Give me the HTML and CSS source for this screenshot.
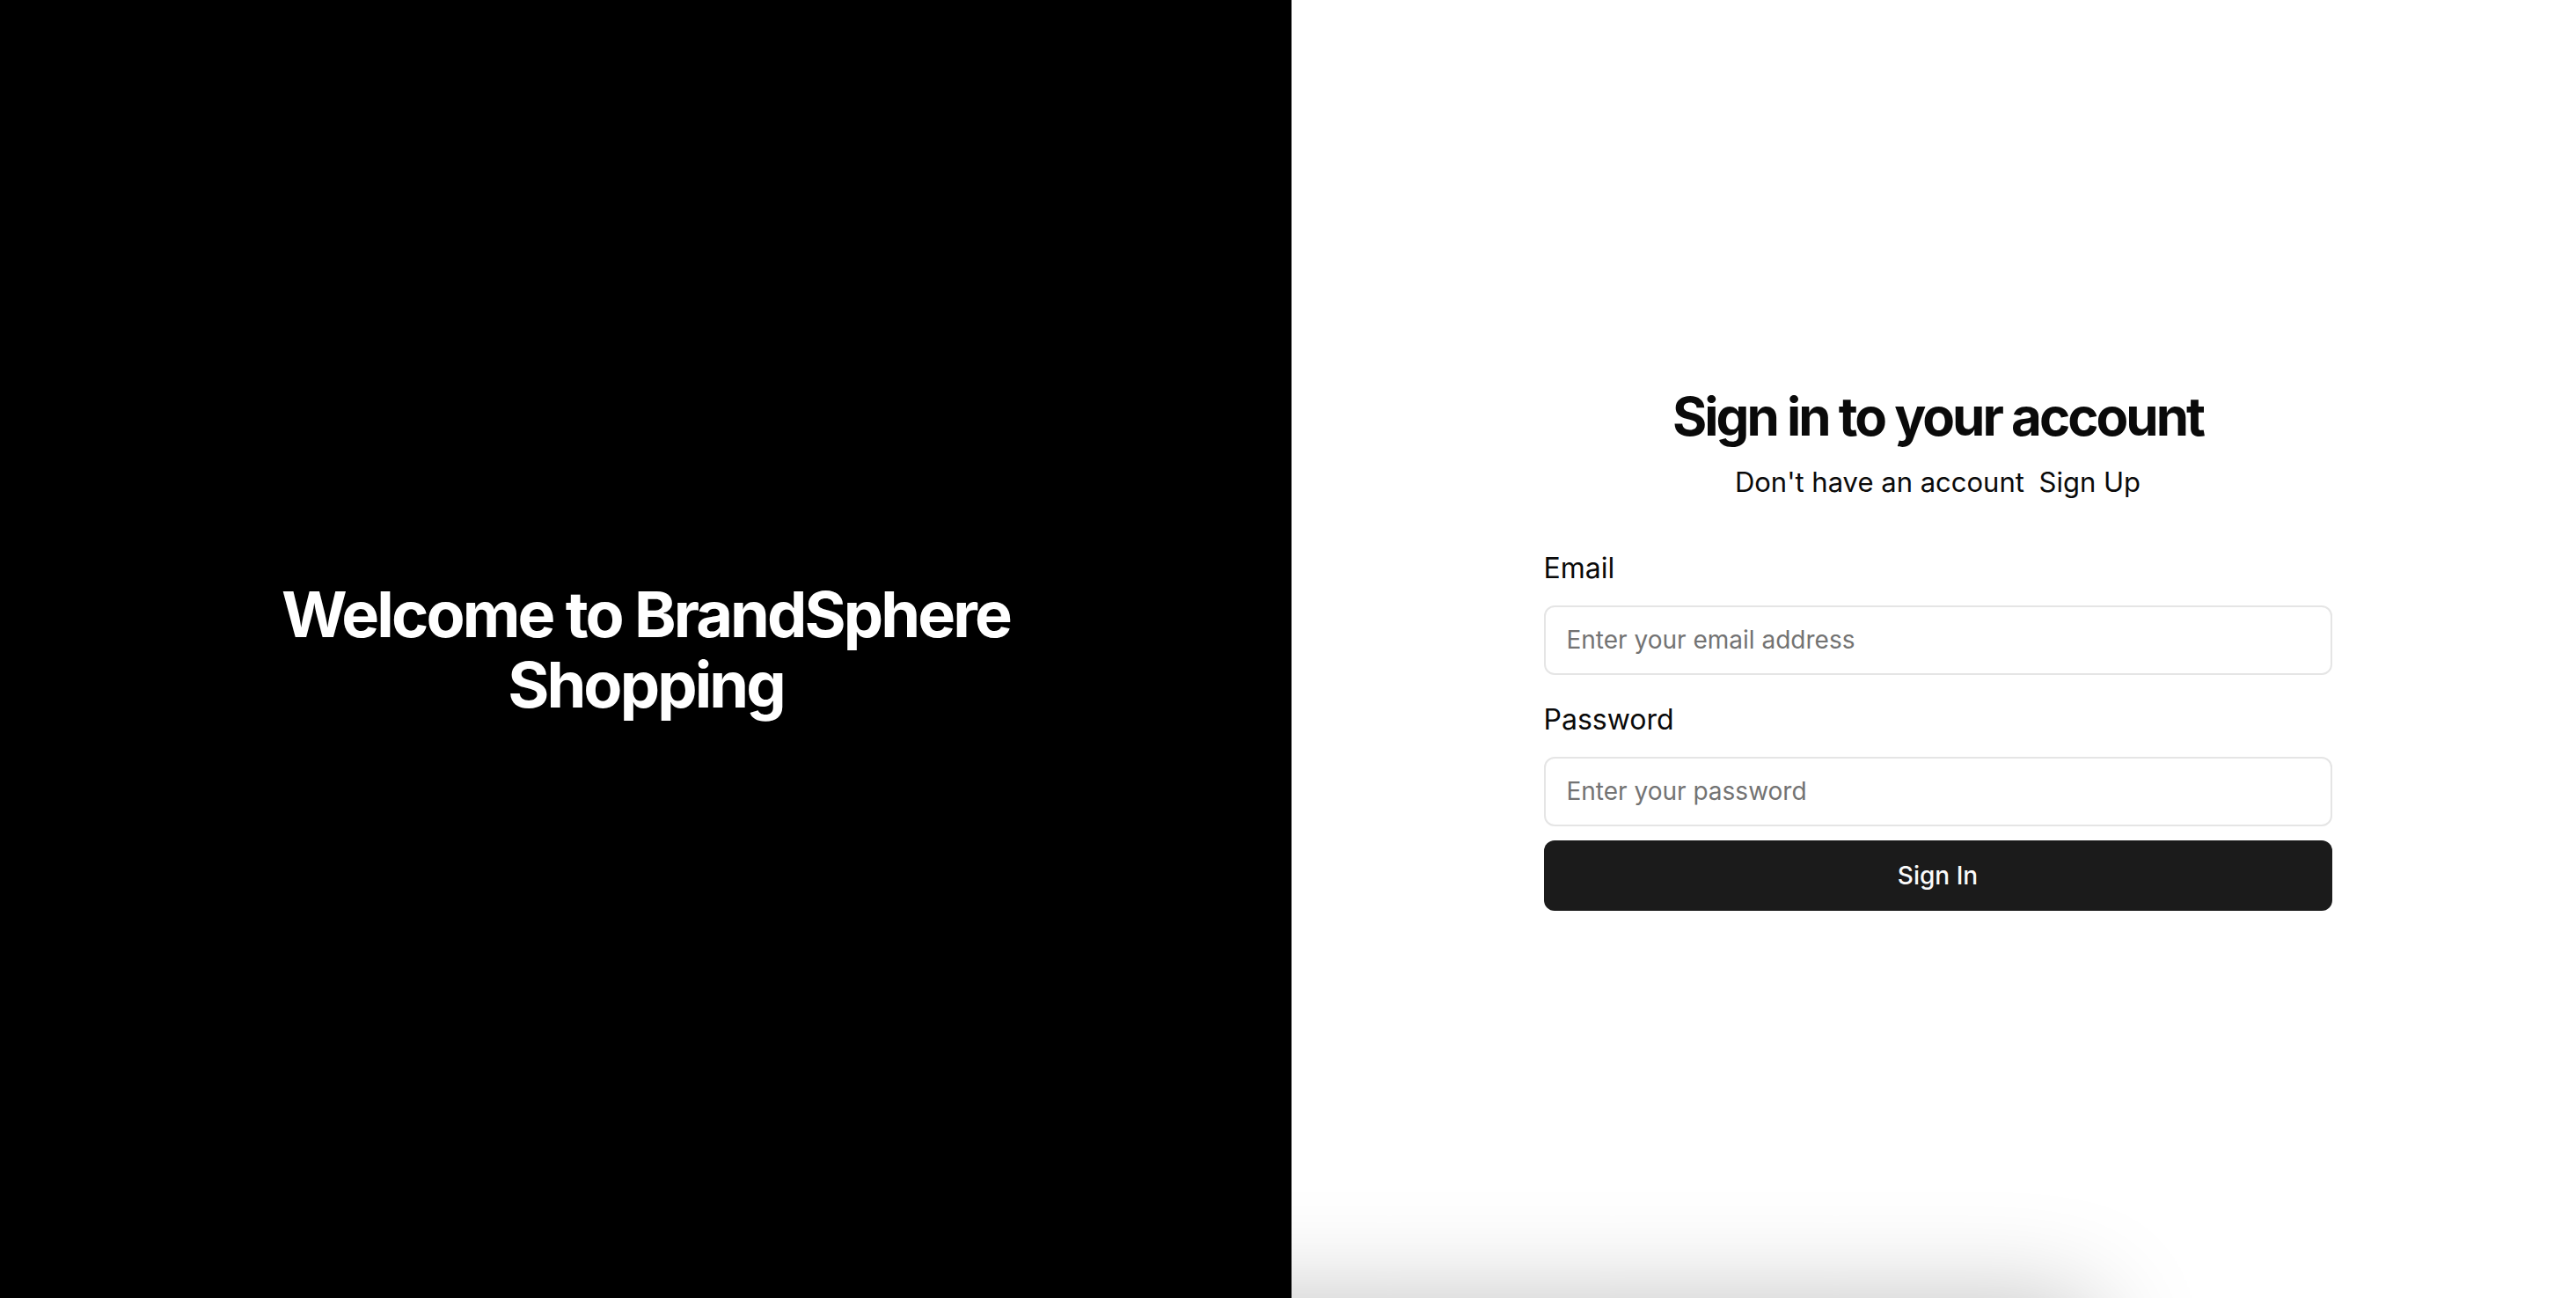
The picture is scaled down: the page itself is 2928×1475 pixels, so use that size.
FILE: index.html
```html
<!DOCTYPE html>
<html lang="en">
<head>
<meta charset="utf-8">
<title>Sign in - BrandSphere</title>
<link rel="stylesheet" href="styles.css">
</head>
<body>
<main class="page">
  <section class="hero">
    <h1 class="hero-title">Welcome to BrandSphere Shopping</h1>
  </section>
  <section class="auth">
    <div class="auth-inner">
      <h2 class="auth-title">Sign in to your account</h2>
      <p class="auth-sub">Don't have an account <a class="auth-link" href="#">Sign Up</a></p>
      <form class="form">
        <div class="field">
          <label class="label" for="email">Email</label>
          <input class="input" id="email" type="email" placeholder="Enter your email address">
        </div>
        <div class="field">
          <label class="label" for="password">Password</label>
          <input class="input" id="password" type="password" placeholder="Enter your password">
        </div>
        <button class="btn" type="button">Sign In</button>
      </form>
    </div>
  </section>
</main>
<div class="toast-shadow"></div>
</body>
</html>
```

FILE: styles.css
```css
* { box-sizing: border-box; }
html, body {
  margin: 0;
  padding: 0;
  height: 100%;
  overflow: hidden;
}
body {
  font-family: Inter, "Noto Sans", "Liberation Sans", sans-serif;
  color: #0a0a0a;
  background: #ffffff;
}
.page {
  display: grid;
  grid-template-columns: 1468px 1fr;
  height: 100vh;
}
.hero {
  background: #000000;
  display: flex;
  align-items: center;
  justify-content: center;
  padding: 0 240px;
  position: relative;
  z-index: 2;
}
.hero-title {
  margin: 0;
  color: #ffffff;
  font-size: 72px;
  line-height: 80px;
  font-weight: 700;
  letter-spacing: -0.04em;
  text-align: center;
}
.auth {
  display: flex;
  align-items: center;
  justify-content: center;
  padding-left: 9px;
  background: #ffffff;
}
.auth-inner {
  width: 896px;
  display: flex;
  flex-direction: column;
  padding-bottom: 4px;
}
.auth-title {
  margin: 0;
  text-align: center;
  font-size: 60px;
  line-height: 72px;
  font-weight: 700;
  letter-spacing: -0.05em;
  color: #0a0a0a;
}
.auth-sub {
  margin: 19px 0 0;
  text-align: center;
  font-size: 31px;
  line-height: 40px;
  color: #0a0a0a;
}
.auth-link {
  color: #0a0a0a;
  text-decoration: none;
  margin-left: 8px;
}
.form {
  margin-top: 58px;
  display: flex;
  flex-direction: column;
}
.field {
  display: flex;
  flex-direction: column;
}
.field + .field {
  margin-top: 31px;
}
.label {
  font-size: 32px;
  line-height: 40px;
  color: #0a0a0a;
  margin-bottom: 22px;
}
.input {
  height: 79px;
  width: 100%;
  border: 2px solid #e5e5e5;
  border-radius: 12px;
  padding: 0 24px;
  font-family: inherit;
  font-size: 28px;
  color: #0a0a0a;
  background: #ffffff;
  outline: none;
}
.input::placeholder {
  color: #737373;
}
.btn {
  margin-top: 16px;
  height: 80px;
  width: 100%;
  border: none;
  border-radius: 12px;
  background: #1b1b1b;
  color: #fafafa;
  font-family: inherit;
  font-size: 28px;
  font-weight: 500;
  cursor: pointer;
}
.toast-shadow {
  position: fixed;
  left: 1250px;
  width: 1130px;
  top: 1480px;
  height: 200px;
  border-radius: 24px;
  background: #ffffff;
  box-shadow: 0 0 120px 0 rgba(0, 0, 0, 0.26);
  z-index: 1;
}
```
